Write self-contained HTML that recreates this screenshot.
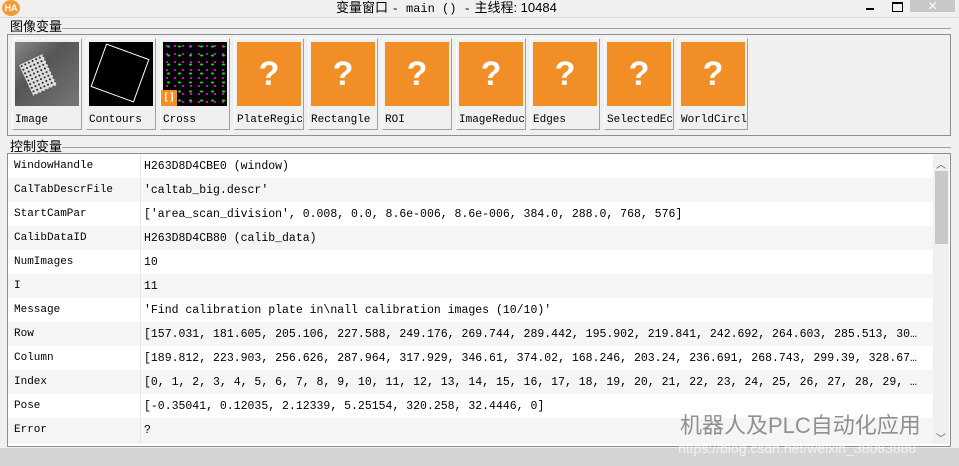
<!DOCTYPE html><html><head><style>
body{margin:0;width:959px;height:466px;background:#f0f0f0;position:relative;overflow:hidden;font-family:"Liberation Mono",monospace;}
.abs{position:absolute}
.t{font-family:"Liberation Sans","Noto Sans CJK SC",sans-serif}
.tile{position:absolute;top:38px;width:68px;height:90px;border:1px solid #fff;border-right-color:#a0a0a0;border-bottom-color:#a0a0a0;background:#f0f0f0}
.tile .img{position:absolute;left:2px;top:3px;width:64px;height:64px;background:#f28e26}
.tile .q{color:#fff;font:bold 34px "Liberation Sans",sans-serif;text-align:center;line-height:64px}
.tile .l{position:absolute;left:2px;top:75px;font-size:11px;white-space:nowrap;overflow:hidden;width:66px;color:#000}
.row{position:absolute;left:8px;width:925px;height:24px;font-size:11.5px;line-height:25px}
.row .k{position:absolute;left:6px;font-size:11px}
.row .v{position:absolute;left:136px;width:787px;white-space:nowrap;overflow:hidden}
</style></head><body>
<div class="abs" style="left:2px;top:0;width:18px;height:16px;border-radius:50%;background:#f39a3a;color:#fff;font:bold 9px 'Liberation Sans';text-align:center;line-height:16px">HA</div>
<div class="abs t" style="left:336px;top:0;font-size:13px;line-height:16px">变量窗口 <span style="font-family:'Liberation Mono';font-size:12px">- main () -</span> 主线程: 10484</div>
<div class="abs" style="left:866px;top:8px;width:8px;height:2px;background:#000"></div>
<div class="abs" style="left:892px;top:2px;width:9px;height:7px;border:1px solid #000;border-top-width:2px"></div>
<div class="abs" style="left:910px;top:0;width:45px;height:12px;background:#c8c8c8;color:#fff;text-align:center;font:12px 'Liberation Sans';line-height:12px">✕</div>
<div class="abs" style="left:0;top:17px;width:959px;height:1px;background:#dcdcdc"></div>
<div class="abs t" style="left:10px;top:19px;font-size:13px;line-height:16px">图像变量</div>
<div class="abs" style="left:62px;top:28px;width:889px;height:1px;background:#a0a0a0"></div>
<div class="abs" style="left:7px;top:34px;width:942px;height:100px;border:1px solid #8a8f96"></div>
<div class="tile" style="left:12px"><div class="img" style="background:linear-gradient(135deg,#888,#555 40%,#777)"><div style="position:absolute;left:10px;top:16px;width:26px;height:34px;background:#ddd;transform:rotate(-25deg);background-image:radial-gradient(#222 30%,transparent 35%);background-size:4px 4px"></div></div><div class="l">Image</div></div>
<div class="tile" style="left:86px"><div class="img" style="background:#000"><div style="position:absolute;left:8px;top:8px;width:44px;height:44px;border:1px solid #fff;transform:rotate(20deg)"></div></div><div class="l">Contours</div></div>
<div class="tile" style="left:160px"><div class="img" style="background:#000;background-image:radial-gradient(#f0f 15%,transparent 20%),radial-gradient(#0f0 15%,transparent 20%);background-size:8px 8px,11px 9px"><div style="position:absolute;left:-2px;top:48px;width:16px;height:16px;background:#f28e26;color:#fff;font:bold 10px monospace;line-height:16px;text-align:center">[]</div></div><div class="l">Cross</div></div>
<div class="tile" style="left:234px"><div class="img q">?</div><div class="l">PlateRegic</div></div>
<div class="tile" style="left:308px"><div class="img q">?</div><div class="l">Rectangle</div></div>
<div class="tile" style="left:382px"><div class="img q">?</div><div class="l">ROI</div></div>
<div class="tile" style="left:456px"><div class="img q">?</div><div class="l">ImageReduc</div></div>
<div class="tile" style="left:530px"><div class="img q">?</div><div class="l">Edges</div></div>
<div class="tile" style="left:604px"><div class="img q">?</div><div class="l">SelectedEc</div></div>
<div class="tile" style="left:678px"><div class="img q">?</div><div class="l">WorldCircl</div></div>
<div class="abs t" style="left:10px;top:139px;font-size:13px;line-height:16px">控制变量</div>
<div class="abs" style="left:62px;top:147px;width:889px;height:1px;background:#a0a0a0"></div>
<div class="abs" style="left:7px;top:153px;width:942px;height:292px;border:1px solid #8a8f96;background:#fff"></div>
<div class="abs" style="left:0;top:154px">
<div class="row" style="top:0"><span class="k">WindowHandle</span><span class="v">H263D8D4CBE0 (window)</span></div>
<div class="row" style="top:24px;background:#f5f5f5"><span class="k">CalTabDescrFile</span><span class="v">'caltab_big.descr'</span></div>
<div class="row" style="top:48px"><span class="k">StartCamPar</span><span class="v">['area_scan_division', 0.008, 0.0, 8.6e-006, 8.6e-006, 384.0, 288.0, 768, 576]</span></div>
<div class="row" style="top:72px;background:#f5f5f5"><span class="k">CalibDataID</span><span class="v">H263D8D4CB80 (calib_data)</span></div>
<div class="row" style="top:96px"><span class="k">NumImages</span><span class="v">10</span></div>
<div class="row" style="top:120px;background:#f5f5f5"><span class="k">I</span><span class="v">11</span></div>
<div class="row" style="top:144px"><span class="k">Message</span><span class="v">'Find calibration plate in\nall calibration images (10/10)'</span></div>
<div class="row" style="top:168px;background:#f5f5f5"><span class="k">Row</span><span class="v">[157.031, 181.605, 205.106, 227.588, 249.176, 269.744, 289.442, 195.902, 219.841, 242.692, 264.603, 285.513, 30…</span></div>
<div class="row" style="top:192px"><span class="k">Column</span><span class="v">[189.812, 223.903, 256.626, 287.964, 317.929, 346.61, 374.02, 168.246, 203.24, 236.691, 268.743, 299.39, 328.67…</span></div>
<div class="row" style="top:216px;background:#f5f5f5"><span class="k">Index</span><span class="v">[0, 1, 2, 3, 4, 5, 6, 7, 8, 9, 10, 11, 12, 13, 14, 15, 16, 17, 18, 19, 20, 21, 22, 23, 24, 25, 26, 27, 28, 29, …</span></div>
<div class="row" style="top:240px"><span class="k">Pose</span><span class="v">[-0.35041, 0.12035, 2.12339, 5.25154, 320.258, 32.4446, 0]</span></div>
<div class="row" style="top:264px;background:#f5f5f5;height:26px"><span class="k">Error</span><span class="v">?</span></div>
</div>
<div class="abs" style="left:140px;top:154px;width:1px;height:290px;background:#e8e8e8"></div>
<div class="abs" style="left:933px;top:154px;width:16px;height:290px;background:#f0f0f0"></div>
<div class="abs" style="left:935px;top:171px;width:13px;height:73px;background:#c8c8c8"></div>
<div class="abs" style="left:936px;top:156px;font:10px 'Liberation Sans';color:#555">︿</div>
<div class="abs" style="left:936px;top:430px;font:10px 'Liberation Sans';color:#555">﹀</div>
<div class="abs" style="left:0;top:448px;width:959px;height:18px;background:#d4d4d4"></div>
<div class="abs t" style="left:680px;top:408px;font-size:22px;color:#777;opacity:.8">机器人及PLC自动化应用</div>
<div class="abs t" style="left:678px;top:440px;font-size:14px;color:#fff;opacity:.7">https://blog.csdn.net/weixin_38083888</div>
</body></html>
